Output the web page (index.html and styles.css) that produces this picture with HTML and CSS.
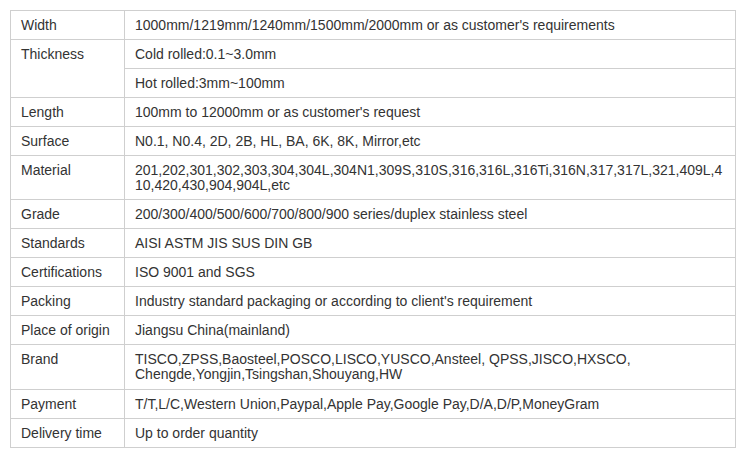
FILE: index.html
```html
<!DOCTYPE html>
<html>
<head>
<meta charset="utf-8">
<link rel="stylesheet" href="styles.css">
</head>
<body>
<table class="spec">
  <tr><td class="k">Width</td><td class="v">1000mm/1219mm/1240mm/1500mm/2000mm or as customer's requirements</td></tr>
  <tr><td class="k" rowspan="2">Thickness</td><td class="v">Cold rolled:0.1~3.0mm</td></tr>
  <tr><td class="v">Hot rolled:3mm~100mm</td></tr>
  <tr><td class="k">Length</td><td class="v">100mm to 12000mm or as customer's request</td></tr>
  <tr><td class="k">Surface</td><td class="v">N0.1, N0.4, 2D, 2B, HL, BA, 6K, 8K, Mirror,etc</td></tr>
  <tr><td class="k">Material</td><td class="v brk">201,202,301,302,303,304,304L,304N1,309S,310S,316,316L,316Ti,316N,317,317L,321,409L,410,420,430,904,904L,etc</td></tr>
  <tr><td class="k">Grade</td><td class="v">200/300/400/500/600/700/800/900 series/duplex stainless steel</td></tr>
  <tr><td class="k">Standards</td><td class="v">AISI ASTM JIS SUS DIN GB</td></tr>
  <tr><td class="k">Certifications</td><td class="v">ISO 9001 and SGS</td></tr>
  <tr><td class="k">Packing</td><td class="v">Industry standard packaging or according to client's requirement</td></tr>
  <tr><td class="k">Place of origin</td><td class="v">Jiangsu China(mainland)</td></tr>
  <tr><td class="k">Brand</td><td class="v brand">TISCO,ZPSS,Baosteel,POSCO,LISCO,YUSCO,Ansteel, QPSS,JISCO,HXSCO,<br>Chengde,Yongjin,Tsingshan,Shouyang,HW</td></tr>
  <tr><td class="k">Payment</td><td class="v">T/T,L/C,Western Union,Paypal,Apple Pay,Google Pay,D/A,D/P,MoneyGram</td></tr>
  <tr><td class="k">Delivery time</td><td class="v">Up to order quantity</td></tr>
</table>
</body>
</html>
```
FILE: styles.css
```css
html, body {
  margin: 0;
  padding: 0;
  background: #fff;
}
body {
  padding: 10px 0 0 10px;
  font-family: "Liberation Sans", Arial, sans-serif;
  font-size: 14px;
  color: #333;
}
.spec {
  border-collapse: collapse;
  width: 726px;
  table-layout: fixed;
}
.spec td {
  border: 1px solid #cfcfcf;
  vertical-align: top;
  line-height: 15px;
  padding: 7px 10px 6px 10px;
  text-align: left;
}
.spec td.k {
  width: 93px;
}
.brk {
  word-break: break-all;
}
.spec td.brand {
  padding-bottom: 7px;
}
```
